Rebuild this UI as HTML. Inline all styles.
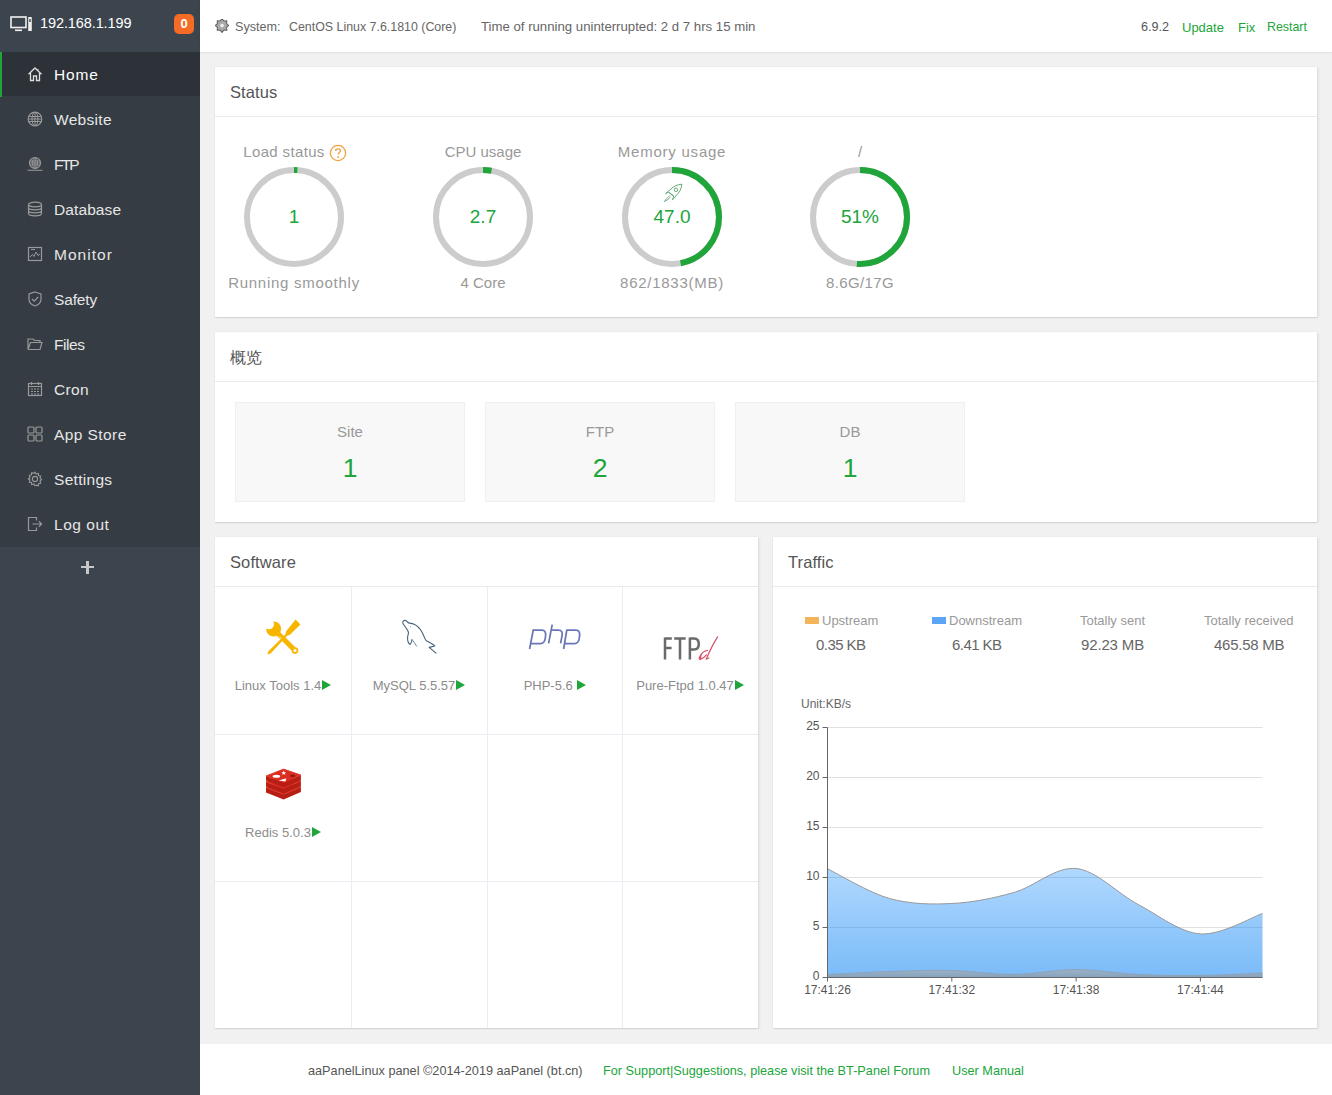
<!DOCTYPE html>
<html><head><meta charset="utf-8">
<style>
*{margin:0;padding:0;box-sizing:border-box}
html,body{width:1332px;height:1095px;overflow:hidden;background:#f1f1f1;font-family:"Liberation Sans",sans-serif;position:relative}
.a{position:absolute;white-space:nowrap}
#side{position:absolute;left:0;top:0;width:200px;height:1095px;background:#3c444d}
#menu{position:absolute;left:0;top:52px;width:200px;height:495px;background:#353c43}
.mi{position:absolute;left:0;width:200px;height:45px}
.mi .t{position:absolute;left:54px;top:0;line-height:45px;font-size:15.5px;color:#e6e6e6;letter-spacing:0.3px}
.mi svg{position:absolute;left:27px;top:14px}
.mi.cur{background:#2d3238;height:44px}
.mi.cur:before{content:"";position:absolute;left:0;top:0;width:2px;height:45px;background:#20a53a}
.mi.cur .t{color:#fff}
#top{position:absolute;left:200px;top:0;width:1132px;height:52px;background:#fff;box-shadow:0 1px 2px rgba(0,0,0,.08)}
.tt{font-size:13px;color:#666;margin-top:1px}
.card{position:absolute;background:#fff;box-shadow:0 0 1px rgba(0,0,0,.13),2px 1px 2px rgba(0,0,0,.05),0 1px 1px rgba(0,0,0,.06)}
.card .hd{position:absolute;left:0;top:0;right:0;height:50px;border-bottom:1px solid #eaeaea}
.card .hd span{position:absolute;left:15px;top:0;line-height:51px;font-size:16.5px;color:#555;letter-spacing:0.1px}
.card .hd span.cn{font-size:15.5px}
.lbl{font-size:15px;color:#999;text-align:center;width:200px}
.ring{position:absolute;width:100px;height:100px}
.rv{position:absolute;width:100px;text-align:center;font-size:19px;color:#20a53a;line-height:20px}
.box{position:absolute;top:70px;width:230px;height:100px;background:#f8f8f8;border:1px solid #efefef}
.box .l{position:absolute;left:0;right:0;top:19.5px;text-align:center;font-size:15px;color:#999}
.box .n{position:absolute;left:0;right:0;top:49.5px;text-align:center;font-size:26.5px;color:#20a53a}
.vl{position:absolute;top:50px;bottom:0;width:1px;background:#ebedf3}
.hl{position:absolute;left:0;right:0;height:1px;background:#ebedf3}
.sw{position:absolute;width:136px;text-align:center;font-size:13px;color:#8c8c8c;margin-top:1px}
.tri{display:inline-block;width:0;height:0;border-left:9px solid #20a53a;border-top:5px solid transparent;border-bottom:5px solid transparent;vertical-align:0px;margin-left:1px}
.tl{font-size:13px;color:#999}
.tv{font-size:15px;color:#666}
.ax{font-size:12px;color:#666}
#foot{position:absolute;left:200px;top:1044px;width:1132px;height:51px;background:#fff}
.ft{font-size:12.7px;margin-top:1px}
</style></head><body>
<div id="side">
  <svg class="a" style="left:10px;top:16px" width="23" height="16" viewBox="0 0 23 16">
    <rect x="1" y="1" width="15" height="10.5" fill="none" stroke="#f0f0f0" stroke-width="1.6"/>
    <rect x="5" y="13.5" width="7" height="1.6" fill="#f0f0f0"/>
    <rect x="18.2" y="1" width="3.6" height="14" rx="0.6" fill="#f0f0f0"/>
    <rect x="19.3" y="3" width="1.4" height="3" fill="#3c444d"/>
  </svg>
  <div class="a" style="left:40px;top:14px;font-size:14.5px;line-height:18px;color:#fff;letter-spacing:-0.1px">192.168.1.199</div>
  <div class="a" style="left:174px;top:14px;width:20px;height:20px;border-radius:5px;background:#f56b25;color:#fff;font-weight:bold;font-size:13px;line-height:20px;text-align:center">0</div>
  <div id="menu">
    <div class="mi cur" style="top:0"><svg width="16" height="16" viewBox="0 0 16 16"><path d="M1.5 8.2 L8 2 L14.5 8.2 M3.5 6.5 V14.5 H6.5 V10 H9.5 V14.5 H12.5 V6.5 M11 3.2 V5" fill="none" stroke="#ddd" stroke-width="1.3"/></svg><span class="t" style="letter-spacing:0.8px">Home</span></div>
    <div class="mi" style="top:45px"><svg width="16" height="16" viewBox="0 0 16 16"><circle cx="8" cy="8" r="6.8" fill="none" stroke="#999" stroke-width="1.2"/><ellipse cx="8" cy="8" rx="3" ry="6.8" fill="none" stroke="#999" stroke-width="1"/><path d="M1.5 5.5H14.5M1.2 8H14.8M1.5 10.5H14.5M8 1.2V14.8" stroke="#999" stroke-width="1"/></svg><span class="t">Website</span></div>
    <div class="mi" style="top:90px"><svg width="16" height="16" viewBox="0 0 16 16"><circle cx="8" cy="7" r="5.5" fill="none" stroke="#999" stroke-width="1.2"/><ellipse cx="8" cy="7" rx="2.4" ry="5.5" fill="none" stroke="#999" stroke-width="1"/><path d="M2.8 5H13.2M2.5 7H13.5M2.8 9H13.2M8 1.5V12.5M0.5 14.2H15.5M6 14.2h4" stroke="#999" stroke-width="1.1"/></svg><span class="t" style="letter-spacing:-1.9px">FTP</span></div>
    <div class="mi" style="top:135px"><svg width="16" height="16" viewBox="0 0 16 16"><ellipse cx="8" cy="3.5" rx="6.5" ry="2.3" fill="none" stroke="#999" stroke-width="1.2"/><path d="M1.5 3.5V12.5C1.5 13.8 4.4 14.8 8 14.8S14.5 13.8 14.5 12.5V3.5M1.5 6.5C1.5 7.8 4.4 8.8 8 8.8S14.5 7.8 14.5 6.5M1.5 9.5C1.5 10.8 4.4 11.8 8 11.8S14.5 10.8 14.5 9.5" fill="none" stroke="#999" stroke-width="1.2"/></svg><span class="t" style="letter-spacing:0.1px">Database</span></div>
    <div class="mi" style="top:180px"><svg width="16" height="16" viewBox="0 0 16 16"><rect x="1.5" y="1.5" width="13" height="13" fill="none" stroke="#999" stroke-width="1.2"/><path d="M3 11L5.5 8.5L7 10.5L9 6L11 9.5L13 8" fill="none" stroke="#999" stroke-width="1"/><path d="M4 3.5h4" stroke="#999"/></svg><span class="t" style="letter-spacing:1.03px">Monitor</span></div>
    <div class="mi" style="top:225px"><svg width="16" height="16" viewBox="0 0 16 16"><path d="M8 1L14 3V8C14 11.5 11 14 8 15C5 14 2 11.5 2 8V3Z" fill="none" stroke="#999" stroke-width="1.2"/><path d="M5 8L7.2 10.2L11.2 6" fill="none" stroke="#999" stroke-width="1.2"/></svg><span class="t" style="letter-spacing:-0.16px">Safety</span></div>
    <div class="mi" style="top:270px"><svg width="16" height="16" viewBox="0 0 16 16"><path d="M1 13.5V3H6L7.5 4.5H13V6.5M1 13.5H13L15 6.5H3.5L1 13.5" fill="none" stroke="#999" stroke-width="1.2"/></svg><span class="t" style="letter-spacing:-0.43px">Files</span></div>
    <div class="mi" style="top:315px"><svg width="16" height="16" viewBox="0 0 16 16"><rect x="1.5" y="2.5" width="13" height="12" fill="none" stroke="#999" stroke-width="1.2"/><path d="M1.5 5.5H14.5M4.5 1V4M11.5 1V4" stroke="#999" stroke-width="1.2"/><path d="M4 8h2M7 8h2M10 8h2M4 10.5h2M7 10.5h2M10 10.5h2M4 13h2M7 13h2M10 13h2" stroke="#999" stroke-width="1"/></svg><span class="t">Cron</span></div>
    <div class="mi" style="top:360px"><svg width="16" height="16" viewBox="0 0 16 16"><rect x="1" y="1" width="6" height="6" rx="1" fill="none" stroke="#999" stroke-width="1.2"/><rect x="9" y="1" width="6" height="6" rx="1" fill="none" stroke="#999" stroke-width="1.2"/><rect x="1" y="9" width="6" height="6" rx="1" fill="none" stroke="#999" stroke-width="1.2"/><rect x="9" y="9" width="6" height="6" rx="1" fill="none" stroke="#999" stroke-width="1.2"/></svg><span class="t" style="letter-spacing:0.42px">App Store</span></div>
    <div class="mi" style="top:405px"><svg width="16" height="16" viewBox="0 0 16 16"><path d="M8 1.2l1.2 1.8 2.1-.6.3 2.1 2.1.6-.7 2 1.6 1.5-1.6 1.4.7 2.1-2.1.5-.3 2.1-2.1-.6L8 14.8l-1.2-1.8-2.1.6-.3-2.1-2.1-.5.7-2.1L1.4 8 3 6.5l-.7-2 2.1-.6.3-2.1 2.1.6z" fill="none" stroke="#999" stroke-width="1.1"/><circle cx="8" cy="8" r="2.6" fill="none" stroke="#999" stroke-width="1.1"/></svg><span class="t">Settings</span></div>
    <div class="mi" style="top:450px"><svg width="16" height="16" viewBox="0 0 16 16"><path d="M9.5 4.5V1.5H1.5V14.5H9.5V11.5M5.5 8H14.5M11.8 5.2L14.6 8L11.8 10.8" fill="none" stroke="#999" stroke-width="1.2"/></svg><span class="t" style="letter-spacing:0.53px">Log out</span></div>
  </div>
  <div class="a" style="left:81px;top:566px;width:13px;height:2.4px;background:#c8c8c8"></div>
  <div class="a" style="left:86.3px;top:560.5px;width:2.4px;height:13px;background:#c8c8c8"></div>
</div>

<div id="top">
  <svg class="a" style="left:15px;top:19px" width="14" height="14" viewBox="0 0 14 14"><path d="M7.00 -0.30 L5.12 1.97 L2.19 1.69 L2.47 4.62 L0.20 6.50 L2.47 8.38 L2.19 11.31 L5.12 11.03 L7.00 13.30 L8.88 11.03 L11.81 11.31 L11.53 8.38 L13.80 6.50 L11.53 4.62 L11.81 1.69 L8.88 1.97 Z" fill="#aaa" stroke="#666" stroke-width="1.1" stroke-linejoin="round"/><circle cx="7" cy="6.5" r="1.8" fill="#eee"/></svg>
  <div class="a tt" style="left:35px;top:18.5px;font-size:12.6px">System:</div>
  <div class="a tt" style="left:89px;top:18.5px;font-size:12.4px">CentOS Linux 7.6.1810 (Core)</div>
  <div class="a tt" style="left:281px;top:17.5px;font-size:13.2px">Time of running uninterrupted: 2 d 7 hrs 15 min</div>
  <div class="a tt" style="left:941px;top:18.5px;color:#555;font-size:12.6px">6.9.2</div>
  <div class="a tt" style="left:982px;top:18.5px;color:#20a53a">Update</div>
  <div class="a tt" style="left:1038px;top:18.5px;color:#20a53a">Fix</div>
  <div class="a tt" style="left:1067px;top:18.5px;color:#20a53a;font-size:12.4px">Restart</div>
</div>

<!-- Status card -->
<div class="card" style="left:215px;top:67px;width:1102px;height:250px">
  <div class="hd"><span>Status</span></div>
  <div class="a lbl" style="left:-22px;top:76px;padding-right:18px;letter-spacing:0.35px">Load status</div>
  <svg class="a" style="left:114px;top:77px" width="18" height="18" viewBox="0 0 18 18"><circle cx="9" cy="9" r="7.6" fill="none" stroke="#f0a13c" stroke-width="1.3"/><path d="M6.6 7.1C6.6 5.7 7.7 4.9 9 4.9S11.4 5.8 11.4 7C11.4 8.5 9.1 8.7 9.1 10.6" fill="none" stroke="#f0a13c" stroke-width="1.3"/><circle cx="9.1" cy="13" r="0.9" fill="#f0a13c"/></svg>
  <svg class="ring" style="left:29px;top:100px" viewBox="0 0 100 100"><circle cx="50" cy="50" r="47" fill="none" stroke="#ccc" stroke-width="6"/><circle cx="50" cy="50" r="47" fill="none" stroke="#20a53a" stroke-width="6" stroke-dasharray="3.4 400" transform="rotate(-90 50 50)"/></svg>
  <div class="rv" style="left:29px;top:140px">1</div>
  <div class="a lbl" style="left:-21px;top:207px;letter-spacing:0.73px">Running smoothly</div>

  <div class="a lbl" style="left:168px;top:76px">CPU usage</div>
  <svg class="ring" style="left:218px;top:100px" viewBox="0 0 100 100"><circle cx="50" cy="50" r="47" fill="none" stroke="#ccc" stroke-width="6"/><circle cx="50" cy="50" r="47" fill="none" stroke="#20a53a" stroke-width="6" stroke-dasharray="8.5 400" transform="rotate(-90 50 50)"/></svg>
  <div class="rv" style="left:218px;top:140px">2.7</div>
  <div class="a lbl" style="left:168px;top:207px">4 Core</div>

  <div class="a lbl" style="left:357px;top:76px;letter-spacing:0.77px">Memory usage</div>
  <svg class="ring" style="left:407px;top:100px" viewBox="0 0 100 100"><circle cx="50" cy="50" r="47" fill="none" stroke="#ccc" stroke-width="6"/><circle cx="50" cy="50" r="47" fill="none" stroke="#20a53a" stroke-width="6" stroke-dasharray="138.8 400" transform="rotate(-90 50 50)"/></svg>
  <svg class="a" style="left:425px;top:103px" width="60" height="40" viewBox="0 0 60 40"><path d="M41.9 14.2 C37 14.6 33.5 16.4 31 19 C28.5 21.2 26.8 22.6 25.6 23.6 L28.8 22.2 L33.8 26.2 L32.4 29.8 C34 28.4 35.4 27 36.2 25.4 C39 22.8 41.6 19.2 41.9 14.2 Z M28.8 22.2 C30.2 23.8 31.8 25.2 33.8 26.2" fill="none" stroke="#55a068" stroke-width="0.9" stroke-linejoin="round"/><circle cx="36" cy="19.8" r="1.75" fill="none" stroke="#55a068" stroke-width="0.9"/><path d="M29.8 25.8 C28 27 25.6 29.6 24.3 31.6 C26.4 30.6 29 28.8 30.6 27" fill="none" stroke="#66aa77" stroke-width="0.9"/></svg>
  <div class="rv" style="left:407px;top:140px">47.0</div>
  <div class="a lbl" style="left:357px;top:207px;letter-spacing:0.73px">862/1833(MB)</div>

  <div class="a lbl" style="left:545px;top:76px">/</div>
  <svg class="ring" style="left:595px;top:100px" viewBox="0 0 100 100"><circle cx="50" cy="50" r="47" fill="none" stroke="#ccc" stroke-width="6"/><circle cx="50" cy="50" r="47" fill="none" stroke="#20a53a" stroke-width="6" stroke-dasharray="150.6 400" transform="rotate(-90 50 50)"/></svg>
  <div class="rv" style="left:595px;top:140px">51%</div>
  <div class="a lbl" style="left:545px;top:207px;letter-spacing:0.38px">8.6G/17G</div>
</div>

<!-- Overview card -->
<div class="card" style="left:215px;top:332px;width:1102px;height:190px">
  <div class="hd"><span class="cn">概览</span></div>
  <div class="box" style="left:20px"><div class="l">Site</div><div class="n">1</div></div>
  <div class="box" style="left:270px"><div class="l">FTP</div><div class="n">2</div></div>
  <div class="box" style="left:520px"><div class="l">DB</div><div class="n">1</div></div>
</div>

<!-- Software card -->
<div class="card" style="left:215px;top:537px;width:543px;height:491px">
  <div class="hd"><span>Software</span></div>
  <div class="vl" style="left:136px"></div>
  <div class="vl" style="left:272px"></div>
  <div class="vl" style="left:407px"></div>
  <div class="hl" style="top:197px"></div>
  <div class="hl" style="top:344px"></div>
  <!-- linux tools -->
  <svg class="a" style="left:40px;top:73px" width="55" height="55" viewBox="0 0 55 55">
    <defs><mask id="wm"><rect width="55" height="55" fill="#fff"/><circle cx="13.9" cy="14.1" r="5.2" fill="#000"/><circle cx="40" cy="40.6" r="1.5" fill="#000"/><path d="M24.2 26.6 L27.6 30" stroke="#000" stroke-width="0.9"/></mask></defs>
    <g fill="#f8b500" stroke="none" mask="url(#wm)">
      <circle cx="18.6" cy="18.9" r="7.5"/>
      <line x1="21" y1="21.5" x2="40" y2="40.6" stroke="#f8b500" stroke-width="5"/>
      <circle cx="40" cy="40.6" r="3.3"/>
    </g>
    <path d="M40.6 9.6 L45.4 14.4 L35 24.8 L32.4 25.4 L15.6 43.4 L12.4 44.4 L13.4 41.2 L30.4 24.4 L31 21.4 Z" fill="#f8b500"/>
  </svg>
  <div class="sw" style="left:0;top:140px">Linux Tools 1.4<i class="tri"></i></div>
  <!-- mysql -->
  <svg class="a" style="left:180px;top:75px" width="50" height="50" viewBox="0 0 50 50">
    <path d="M17.1 27.2 C16.6 29.4 16.2 31.8 15.2 32.4 C13.6 31.6 12.4 29 12.6 25.2 C12.8 22.6 14 21.6 13.3 19.8 C12.2 17 10 14.5 8.2 12 C7.2 10.6 8 8.6 9.8 8.4 C11.2 8.3 12.6 10.2 13.8 11 C15.2 11.2 17.2 11.3 19.2 12.3 C22.2 13.8 25.2 16.8 27.2 20.4 C29.2 24 29.8 27.6 31.2 28.6 C33.2 30 36.6 31.2 39.8 34 L34.2 35.4 L41.3 41.3" fill="none" stroke="#45627a" stroke-width="1.1" stroke-linejoin="round"/>
    <path d="M17.6 28.2 L21.8 34.4" fill="none" stroke="#5f7a8e" stroke-width="0.9"/>
    <circle cx="15.5" cy="14.8" r="0.55" fill="#8a8a9a"/>
  </svg>
  <div class="sw" style="left:136px;top:140px">MySQL 5.5.57<i class="tri"></i></div>
  <!-- php -->
  <svg class="a" style="left:305px;top:78px" width="70" height="45" viewBox="0 0 70 45">
    <path d="M13.2 15.2 L9.6 34 M12.6 15.2 H22 C24.8 15.2 26 17.5 25.6 20.5 L25.3 23 C24.8 26.5 23.5 28.6 20.5 28.6 H11.2 M32.2 9.6 L28.6 28.4 M31.4 15.2 H38.6 C41.5 15.2 42.6 17 42.2 19.8 L40.6 28.4 M46.8 15.2 L43.6 34 M46.2 15.2 H56 C58.8 15.2 60 17.5 59.6 20.5 L59.3 23 C58.8 26.5 57.5 28.6 54.5 28.6 H45.2" fill="none" stroke="#6b76b6" stroke-width="1.75"/>
  </svg>
  <div class="sw" style="left:272px;top:140px">PHP-5.6 <i class="tri"></i></div>
  <!-- ftpd -->
  <svg class="a" style="left:440px;top:88px" width="70" height="45" viewBox="0 0 70 45">
    <path d="M10 12.4 V34.6 M10 13.5 H16.8 M10 23 H16.6 M19.2 13.5 H30.7 M25 13.5 V34.6 M34.9 12.4 V34.6 M34.9 13.5 H39 C42.2 13.5 43.8 15.4 43.8 19.1 C43.8 22.7 42.2 24.6 39 24.6 H34.9" fill="none" stroke="#6a6a6a" stroke-width="2.5"/>
    <path d="M62.6 11.8 C58.6 18 54.4 26.5 51.2 34.2 L53.8 33 M52.4 25.3 C49 26 46 28.5 44.6 32 C44 33.6 44.2 34.6 45.4 34.3 C47.4 33.8 49.6 32 51.4 29.8" fill="none" stroke="#d9536a" stroke-width="1.25" stroke-linecap="round" stroke-linejoin="round"/><path d="M44.2 34.4 C44.2 32 45.4 30 47.2 28.6 C46.4 30.4 46 32.4 46.6 33.8 Z" fill="#d9536a"/>
  </svg>
  <div class="sw" style="left:407px;top:140px">Pure-Ftpd 1.0.47<i class="tri"></i></div>
  <!-- redis -->
  <svg class="a" style="left:43px;top:223px" width="50" height="50" viewBox="0 0 50 50">
    <path d="M8 27.8 L8 32.4 L25.6 39.4 L42.9 32.0 L42.9 26.9 L25.6 34.2 Z" fill="#b71e14"/><path d="M8 27.8 L25.6 20.9 L42.9 26.9 L25.6 34.2 Z" fill="#dc2d22" stroke="#dc2d22" stroke-width="0.8" stroke-linejoin="round"/><path d="M8 21.9 L8 26.5 L25.6 33.5 L42.9 26.1 L42.9 21.0 L25.6 28.3 Z" fill="#b71e14"/><path d="M8 21.9 L25.6 15.0 L42.9 21.0 L25.6 28.3 Z" fill="#dc2d22" stroke="#dc2d22" stroke-width="0.8" stroke-linejoin="round"/><path d="M8 16.0 L8 20.6 L25.6 27.6 L42.9 20.2 L42.9 15.1 L25.6 22.4 Z" fill="#b71e14"/><path d="M8 16.0 L25.6 9.1 L42.9 15.1 L25.6 22.4 Z" fill="#dc2d22" stroke="#dc2d22" stroke-width="0.8" stroke-linejoin="round"/>
    <ellipse cx="18.4" cy="16.3" rx="3.8" ry="1.5" fill="#fff"/>
    <path d="M25.6 10.6 L26.3 12.2 L28.2 12.3 L26.8 13.3 L27.4 15 L25.7 14.1 L24.1 15 L24.6 13.3 L23.2 12.3 L25 12.2 Z" fill="#fff"/>
    <path d="M20.6 20.6 L28.3 18.3 L27.4 21.6 Z" fill="#fff"/>
    <path d="M31.5 15.6 L35.6 14.2 L37.8 16.2 L33.6 17.6 Z" fill="#8e1b12"/>
  </svg>
  <div class="sw" style="left:0;top:287px">Redis 5.0.3<i class="tri"></i></div>
</div>

<!-- Traffic card -->
<div class="card" style="left:773px;top:537px;width:544px;height:491px">
  <div class="hd"><span>Traffic</span></div>
  <svg class="a" style="left:0;top:0" width="544" height="491" viewBox="0 0 544 491">
  <defs><linearGradient id="gd" x1="0" y1="0" x2="0" y2="1"><stop offset="0" stop-color="#b0d8fe"/><stop offset="1" stop-color="#7abbf9"/></linearGradient>
  <linearGradient id="gu" x1="0" y1="0" x2="0" y2="1"><stop offset="0" stop-color="#9cb3c8"/><stop offset="1" stop-color="#86a2bd"/></linearGradient></defs>
  <path d="M54.5 390.5 H489.5" stroke="#e0e0e0" stroke-width="1"/>
  <path d="M54.5 340.5 H489.5" stroke="#e0e0e0" stroke-width="1"/>
  <path d="M54.5 290.5 H489.5" stroke="#e0e0e0" stroke-width="1"/>
  <path d="M54.5 240.5 H489.5" stroke="#e0e0e0" stroke-width="1"/>
  <path d="M54.5 190.5 H489.5" stroke="#e0e0e0" stroke-width="1"/>
  <clipPath id="ca"><path d="M54.50 331.80 C64.86 336.75 95.93 355.72 116.64 361.50 C137.36 367.28 158.07 367.50 178.79 366.50 C199.50 365.50 220.21 361.33 240.93 355.50 C261.64 349.67 282.36 329.50 303.07 331.50 C323.79 333.50 344.50 356.60 365.21 367.50 C385.93 378.40 406.64 395.40 427.36 396.90 C448.07 398.40 479.14 379.90 489.50 376.50 L489.5 440.5 L54.5 440.5 Z"/></clipPath>
  <path d="M54.50 331.80 C64.86 336.75 95.93 355.72 116.64 361.50 C137.36 367.28 158.07 367.50 178.79 366.50 C199.50 365.50 220.21 361.33 240.93 355.50 C261.64 349.67 282.36 329.50 303.07 331.50 C323.79 333.50 344.50 356.60 365.21 367.50 C385.93 378.40 406.64 395.40 427.36 396.90 C448.07 398.40 479.14 379.90 489.50 376.50 L489.5 440.5 L54.5 440.5 Z" fill="url(#gd)"/>
  <path d="M54.5 390.5 H489.5" stroke="#5f8fc0" stroke-opacity=".3" stroke-width="1" clip-path="url(#ca)"/>
  <path d="M54.5 340.5 H489.5" stroke="#5f8fc0" stroke-opacity=".3" stroke-width="1" clip-path="url(#ca)"/>
  <path d="M54.50 331.80 C64.86 336.75 95.93 355.72 116.64 361.50 C137.36 367.28 158.07 367.50 178.79 366.50 C199.50 365.50 220.21 361.33 240.93 355.50 C261.64 349.67 282.36 329.50 303.07 331.50 C323.79 333.50 344.50 356.60 365.21 367.50 C385.93 378.40 406.64 395.40 427.36 396.90 C448.07 398.40 479.14 379.90 489.50 376.50" fill="none" stroke="#999" stroke-width="1"/>
  <path d="M54.50 437.50 C64.86 437.00 95.93 435.17 116.64 434.50 C137.36 433.83 158.07 433.00 178.79 433.50 C199.50 434.00 220.21 437.67 240.93 437.50 C261.64 437.33 282.36 432.50 303.07 432.50 C323.79 432.50 344.50 436.50 365.21 437.50 C385.93 438.50 406.64 438.75 427.36 438.50 C448.07 438.25 479.14 436.42 489.50 436.00 L489.5 440.5 L54.5 440.5 Z" fill="url(#gu)"/>
  <path d="M54.50 437.50 C64.86 437.00 95.93 435.17 116.64 434.50 C137.36 433.83 158.07 433.00 178.79 433.50 C199.50 434.00 220.21 437.67 240.93 437.50 C261.64 437.33 282.36 432.50 303.07 432.50 C323.79 432.50 344.50 436.50 365.21 437.50 C385.93 438.50 406.64 438.75 427.36 438.50 C448.07 438.25 479.14 436.42 489.50 436.00" fill="none" stroke="#8fa3b6" stroke-width="1"/>
  <path d="M54.5 190.5 V440.5 H489.5" fill="none" stroke="#666" stroke-width="1"/>
  <path d="M49.5 440.5 H54.5" stroke="#666" stroke-width="1"/>
  <text x="46.5" y="443.2" text-anchor="end" font-family="Liberation Sans" font-size="12" fill="#555">0</text>
  <path d="M49.5 390.5 H54.5" stroke="#666" stroke-width="1"/>
  <text x="46.5" y="393.2" text-anchor="end" font-family="Liberation Sans" font-size="12" fill="#555">5</text>
  <path d="M49.5 340.5 H54.5" stroke="#666" stroke-width="1"/>
  <text x="46.5" y="343.2" text-anchor="end" font-family="Liberation Sans" font-size="12" fill="#555">10</text>
  <path d="M49.5 290.5 H54.5" stroke="#666" stroke-width="1"/>
  <text x="46.5" y="293.2" text-anchor="end" font-family="Liberation Sans" font-size="12" fill="#555">15</text>
  <path d="M49.5 240.5 H54.5" stroke="#666" stroke-width="1"/>
  <text x="46.5" y="243.2" text-anchor="end" font-family="Liberation Sans" font-size="12" fill="#555">20</text>
  <path d="M49.5 190.5 H54.5" stroke="#666" stroke-width="1"/>
  <text x="46.5" y="193.2" text-anchor="end" font-family="Liberation Sans" font-size="12" fill="#555">25</text>
  <path d="M54.5 440.5 V444.5" stroke="#666" stroke-width="1"/>
  <text x="54.5" y="456.7" text-anchor="middle" font-family="Liberation Sans" font-size="12" fill="#555">17:41:26</text>
  <path d="M178.8 440.5 V444.5" stroke="#666" stroke-width="1"/>
  <text x="178.8" y="456.7" text-anchor="middle" font-family="Liberation Sans" font-size="12" fill="#555">17:41:32</text>
  <path d="M303.1 440.5 V444.5" stroke="#666" stroke-width="1"/>
  <text x="303.1" y="456.7" text-anchor="middle" font-family="Liberation Sans" font-size="12" fill="#555">17:41:38</text>
  <path d="M427.4 440.5 V444.5" stroke="#666" stroke-width="1"/>
  <text x="427.4" y="456.7" text-anchor="middle" font-family="Liberation Sans" font-size="12" fill="#555">17:41:44</text>
</svg>
  <div class="a tl" style="left:32px;top:76px"><i style="display:inline-block;width:14px;height:7px;background:#f3b45a;margin-right:3px;vertical-align:1px"></i>Upstream</div>
  <div class="a tl" style="left:159px;top:76px"><i style="display:inline-block;width:14px;height:7px;background:#5ca4f5;margin-right:3px;vertical-align:1px"></i>Downstream</div>
  <div class="a tl" style="left:307px;top:76px">Totally sent</div>
  <div class="a tl" style="left:431px;top:76px">Totally received</div>
  <div class="a tv" style="left:43px;top:99px;letter-spacing:-0.55px">0.35 KB</div>
  <div class="a tv" style="left:179px;top:99px;letter-spacing:-0.55px">6.41 KB</div>
  <div class="a tv" style="left:308px;top:99px;letter-spacing:-0.15px">92.23 MB</div>
  <div class="a tv" style="left:441px;top:99px;letter-spacing:-0.25px">465.58 MB</div>
  <div class="a ax" style="left:28px;top:160px">Unit:KB/s</div>
</div>

<div id="foot">
  <div class="a ft" style="left:108px;top:19px;color:#555">aaPanelLinux panel ©2014-2019 aaPanel (bt.cn)</div>
  <div class="a ft" style="left:403px;top:19px;color:#20a53a">For Support|Suggestions, please visit the BT-Panel Forum</div>
  <div class="a ft" style="left:752px;top:19px;color:#20a53a">User Manual</div>
</div>
</body></html>
